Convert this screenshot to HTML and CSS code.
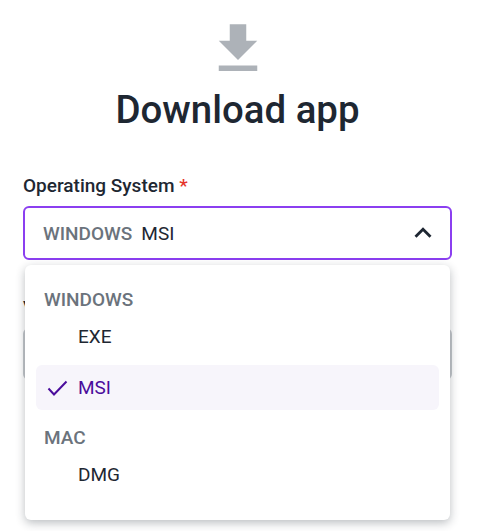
FILE: index.html
```html
<!DOCTYPE html>
<html>

<head>
    <meta charset="UTF-8">
    <meta name="viewport" content="width=device-width, initial-scale=1.0">
    <link rel="stylesheet" href="styles.css">
</head>

<body>
    <div class="download-form">
        <!-- 标题区域 -->
        <div class="form-header">
            <svg class="header-icon" xmlns="http://www.w3.org/2000/svg" viewBox="0 0 24 24">
                <path d="M19 9h-4V3H9v6H5l7 7 7-7zM5 18v2h14v-2H5z" />
            </svg>
            <h1 class="title">Download app</h1>
        </div>

        <div class="field os-field">
            <label class="field-label">Operating System <span class="required">*</span></label>
            <div class="select select-open">
                <span class="select-group">WINDOWS</span>
                <span class="select-value">MSI</span>
                <svg class="select-arrow" xmlns="http://www.w3.org/2000/svg" viewBox="0 0 24 24">
                    <path d="M7.41 15.41L12 10.83l4.59 4.58L18 14l-6-6-6 6z" />
                </svg>
            </div>

            <!-- 下拉菜单 -->
            <div class="menu">
                <div class="menu-group">WINDOWS</div>
                <div class="menu-item">EXE</div>
                <div class="menu-item selected">
                    <svg class="check" xmlns="http://www.w3.org/2000/svg" viewBox="0 0 22 20">
                        <path d="M1.5 10.5L7 16.5L19.5 3.5" />
                    </svg>
                    MSI
                </div>
                <div class="menu-group">MAC</div>
                <div class="menu-item">DMG</div>
            </div>
        </div>

        <div class="field">
            <label class="field-label">Version</label>
            <div class="select select-disabled"></div>
        </div>
    </div>
</body>

</html>
```

FILE: styles.css
```css
body {
    margin: 0;
    padding: 0;
    font-family: Roboto, "Liberation Sans", sans-serif;
    background-color: #ffffff;
    color: #1e2732;
}

.download-form {
    width: 429px;
    min-height: 515px;
    margin-left: 23px;
    padding-top: 16px;
}

/* 标题 */
.form-header {
    display: flex;
    flex-direction: column;
    align-items: center;
}

.header-icon {
    width: 66px;
    height: 66px;
    fill: #adb2b8;
}

.title {
    margin: 0;
    margin-top: 5px;
    font-size: 38.4px;
    line-height: 46px;
    font-weight: 500;
}

/* 表单字段 */
.field {
    margin-top: 34px;
}

.os-field {
    position: relative;
    margin-top: 39px;
}

.field-label {
    display: block;
    font-size: 19px;
    line-height: 28px;
    font-weight: 500;
    margin-bottom: 6px;
}

.required {
    color: #e5332a;
}

.select {
    display: flex;
    align-items: center;
    box-sizing: border-box;
    height: 54px;
    padding: 0 18px;
    border: 2px solid #8b3ff0;
    border-radius: 6px;
    font-size: 19px;
}

.select-group {
    color: #6b737c;
    font-weight: 500;
    margin-right: 9px;
}

.select-arrow {
    width: 34px;
    height: 34px;
    margin-left: auto;
    margin-right: -8px;
    fill: #1e2732;
}

.select-disabled {
    height: 52px;
    border: 2px solid #c4c8cc;
    background-color: #f4f5f6;
}

/* 下拉菜单 */
.menu {
    position: absolute;
    top: 93px;
    left: 2px;
    right: 2px;
    box-sizing: border-box;
    height: 255px;
    padding: 23px 11px 0;
    background-color: #ffffff;
    border-radius: 6px;
    box-shadow: 0 3px 10px rgba(30, 39, 50, 0.3);
}

.menu-group {
    padding-left: 8px;
    margin-bottom: 2px;
    font-size: 19px;
    line-height: 24px;
    font-weight: 500;
    color: #6b737c;
}

.menu-item {
    display: flex;
    align-items: center;
    height: 45px;
    padding-left: 42px;
    font-size: 19px;
    border-radius: 6px;
    position: relative;
}

.menu-item.selected {
    margin-top: 6px;
    margin-bottom: 16px;
    color: #4b0d9c;
    background-color: #f7f5fb;
}

.check {
    position: absolute;
    left: 11px;
    top: 13px;
    width: 22px;
    height: 20px;
    fill: none;
    stroke: #4b0d9c;
    stroke-width: 2;
}
```
